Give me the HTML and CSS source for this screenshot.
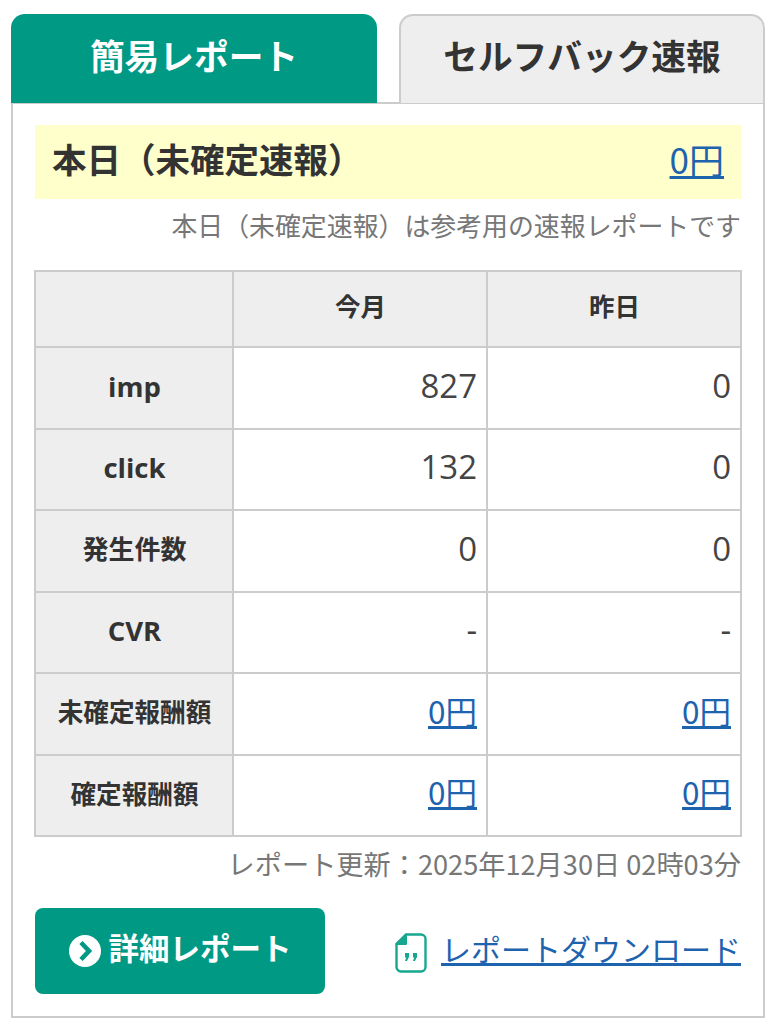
FILE: index.html
```html
<!DOCTYPE html>
<html lang="ja">
<head>
<meta charset="utf-8">
<title>簡易レポート</title>
<link rel="stylesheet" href="styles.css">
</head>
<body>
<div class="widget">
  <div class="tabs">
    <div class="tab tab-active">簡易レポート</div>
    <div class="tab">セルフバック速報</div>
  </div>
  <div class="panel">
    <div class="today">
      <span class="today-label">本日（未確定速報）</span>
      <a class="today-value" href="#">0円</a>
    </div>
    <p class="note">本日（未確定速報）は参考用の速報レポートです</p>
    <table class="report">
      <colgroup><col class="col-label"><col class="col-value"><col class="col-value"></colgroup>
      <thead>
        <tr><th></th><th>今月</th><th>昨日</th></tr>
      </thead>
      <tbody>
        <tr><th class="latin">imp</th><td>827</td><td>0</td></tr>
        <tr><th class="latin">click</th><td>132</td><td>0</td></tr>
        <tr><th>発生件数</th><td>0</td><td>0</td></tr>
        <tr><th class="latin">CVR</th><td>-</td><td>-</td></tr>
        <tr><th class="small">未確定報酬額</th><td><a href="#">0円</a></td><td><a href="#">0円</a></td></tr>
        <tr><th class="small">確定報酬額</th><td><a href="#">0円</a></td><td><a href="#">0円</a></td></tr>
      </tbody>
    </table>
    <p class="updated">レポート更新：2025年12月30日 02時03分</p>
    <div class="actions">
      <a class="detail-btn" href="#">
        <svg class="detail-icon" viewBox="0 0 32 32" aria-hidden="true">
          <circle cx="16" cy="16" r="16" fill="#fff"/>
          <path d="M12 7.5 L20 16 L12 24.5" fill="none" stroke="#009984" stroke-width="4.6"/>
        </svg>
        <span>詳細レポート</span>
      </a>
      <a class="download" href="#">
        <svg class="download-icon" viewBox="0 0 32 40" aria-hidden="true">
          <path d="M11 1.5 H26 a4.5 4.5 0 0 1 4.5 4.5 V34 a4.5 4.5 0 0 1 -4.5 4.5 H6 a4.5 4.5 0 0 1 -4.5 -4.5 V11 Z" fill="#fff" stroke="#17a78f" stroke-width="2.4" stroke-linejoin="round"/>
          <path d="M11 1.5 V11 H1.5 Z" fill="#17a78f" stroke="#17a78f" stroke-width="2" stroke-linejoin="round"/>
          <path d="M10 20 h4 v4 l-2 4 h-2 l1.2 -3.5 H10 Z M18 20 h4 v4 l-2 4 h-2 l1.2 -3.5 H18 Z" fill="#17a78f"/>
        </svg>
        <span class="download-text">レポートダウンロード</span>
      </a>
    </div>
  </div>
</div>
</body>
</html>
```
FILE: styles.css
```css
* { box-sizing: border-box; }
html, body { margin: 0; background: #fff; }
body {
  padding: 14px 14px 6px 11px;
  font-family: "Noto Sans CJK JP", "Open Sans", sans-serif;
  color: #333;
}
.widget { width: 754px; }
.tabs { display: flex; justify-content: space-between; }
.tab {
  width: 366px;
  height: 89px;
  margin-bottom: -1px;
  padding-bottom: 9px;
  display: flex;
  align-items: center;
  justify-content: center;
  font-size: 34.7px;
  font-weight: 700;
  background: #eee;
  border: 2px solid #ccc;
  border-bottom: 0;
  border-radius: 14px 14px 0 0;
}
.tab-active {
  position: relative;
  z-index: 1;
  background: #009984;
  border-color: #009984;
  color: #fff;
}
.panel {
  height: 916px;
  border: 2px solid #ccc;
  padding: 21px 22px 0;
}
.today {
  height: 74px;
  padding: 0 17px 8px;
  display: flex;
  align-items: center;
  justify-content: space-between;
  background: #ffc;
}
.today-label { font-size: 34.5px; font-weight: 700; line-height: 1; }
.today-value { font-size: 35px; line-height: 1; color: #1e63ad; }
.note {
  margin: 11px 0 0;
  font-size: 25.9px;
  line-height: 30px;
  text-align: right;
  color: #777;
}
.report {
  width: 707px;
  margin: 30px 0 0 -1px;
  border-collapse: collapse;
  table-layout: fixed;
}
.col-label { width: 198px; }
.col-value { width: 254px; }
.report th, .report td {
  border: 2px solid #ccc;
  height: 81.5px;
  padding: 0 9px 5px 10px;
  line-height: 1;
}
.report thead th { height: 76px; padding-bottom: 9px; background: #eee; font-size: 25.5px; }
.report tbody th { background: #eee; font-size: 26px; }
.report tbody th.small { font-size: 25.6px; }
.report tbody th.latin { font-family: "Open Sans", sans-serif; font-size: 27.5px; padding-bottom: 3px; }
.report td { text-align: right; font-size: 33px; font-family: "Open Sans", "Noto Sans CJK JP", sans-serif; color: #444; }
.report td a { font-family: "Noto Sans CJK JP", sans-serif; font-size: 31.5px; color: #1e63ad; }
.updated {
  margin: 10px 0 0;
  font-size: 27.2px;
  line-height: 32px;
  text-align: right;
  color: #777;
}
.actions {
  margin-top: 29px;
  display: flex;
  align-items: center;
  justify-content: space-between;
}
.detail-btn {
  width: 290px;
  height: 86px;
  padding-bottom: 8px;
  display: flex;
  align-items: center;
  justify-content: center;
  gap: 8px;
  background: #009984;
  border-radius: 8px;
  color: #fff;
  font-size: 30.5px;
  font-weight: 700;
  text-decoration: none;
}
.detail-icon { width: 32px; height: 32px; flex: none; margin-top: 8px; }
.download { display: flex; align-items: center; gap: 14px; color: #1e63ad; text-decoration: none; }
.download-icon { width: 32px; height: 40px; flex: none; margin-top: 4px; }
.download-text { font-size: 30px; line-height: 1.2; text-decoration: underline; margin-bottom: 6px; }
```
